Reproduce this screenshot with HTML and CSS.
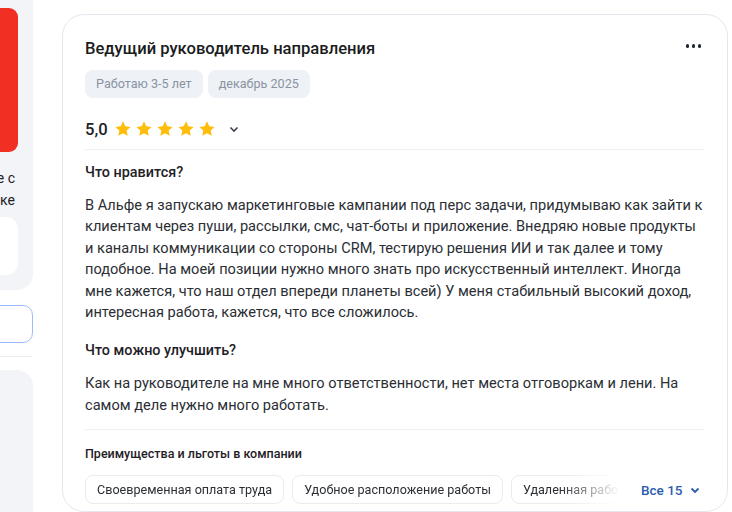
FILE: index.html
```html
<!DOCTYPE html>
<html lang="ru">
<head>
  <meta charset="UTF-8">
  <meta name="viewport" content="width=device-width, initial-scale=1.0">
  <title>Отзыв</title>
  <link rel="stylesheet" href="styles.css">
</head>
<body>
  <aside class="side">
    <div class="promo">
      <div class="promo-banner"></div>
      <p class="promo-text">Узнайте больше о компании и работе с<br>нами в нашей рассылке</p>
      <div class="promo-box"></div>
    </div>
    <div class="side-button"></div>
    <hr class="side-line">
    <div class="promo promo-next"></div>
  </aside>

  <main class="review">
    <div class="review-head">
      <h1>Ведущий руководитель направления</h1>
      <button class="more" aria-label="Ещё">
        <span></span><span></span><span></span>
      </button>
    </div>

    <div class="tags">
      <span class="tag">Работаю 3-5 лет</span>
      <span class="tag">декабрь 2025</span>
    </div>

    <div class="rating">
      <span class="score">5,0</span>
      <div class="stars">
        <svg viewBox="0 0 24 24"><path d="M12 1.8l3.1 6.5 7 .9-5.2 4.9 1.4 7L12 17.6l-6.3 3.5 1.4-7L1.9 9.2l7-.9z"/></svg>
        <svg viewBox="0 0 24 24"><path d="M12 1.8l3.1 6.5 7 .9-5.2 4.9 1.4 7L12 17.6l-6.3 3.5 1.4-7L1.9 9.2l7-.9z"/></svg>
        <svg viewBox="0 0 24 24"><path d="M12 1.8l3.1 6.5 7 .9-5.2 4.9 1.4 7L12 17.6l-6.3 3.5 1.4-7L1.9 9.2l7-.9z"/></svg>
        <svg viewBox="0 0 24 24"><path d="M12 1.8l3.1 6.5 7 .9-5.2 4.9 1.4 7L12 17.6l-6.3 3.5 1.4-7L1.9 9.2l7-.9z"/></svg>
        <svg viewBox="0 0 24 24"><path d="M12 1.8l3.1 6.5 7 .9-5.2 4.9 1.4 7L12 17.6l-6.3 3.5 1.4-7L1.9 9.2l7-.9z"/></svg>
      </div>
      <svg class="chevron" viewBox="0 0 12 12"><path d="M2.5 4.5L6 8l3.5-3.5"/></svg>
    </div>

    <section class="block">
      <h2>Что нравится?</h2>
      <p>В Альфе я запускаю маркетинговые кампании под перс задачи, придумываю как зайти к клиентам через пуши, рассылки, смс, чат-боты и приложение. Внедряю новые продукты и каналы коммуникации со стороны CRM, тестирую решения ИИ и так далее и тому подобное. На моей позиции нужно много знать про искусственный интеллект. Иногда мне кажется, что наш отдел впереди планеты всей) У меня стабильный высокий доход, интересная работа, кажется, что все сложилось.</p>
      <h2>Что можно улучшить?</h2>
      <p>Как на руководителе на мне много ответственности, нет места отговоркам и лени. На самом деле нужно много работать.</p>
    </section>

    <section class="perks">
      <h3>Преимущества и льготы в компании</h3>
      <div class="perks-row">
        <div class="chips">
          <span class="chip">Своевременная оплата труда</span>
          <span class="chip">Удобное расположение работы</span>
          <span class="chip">Удаленная работа</span>
        </div>
        <button class="all">Все 15
          <svg viewBox="0 0 12 12"><path d="M2.5 4.5L6 8l3.5-3.5"/></svg>
        </button>
      </div>
    </section>
  </main>
</body>
</html>
```

FILE: styles.css
```css
body {
  margin: 0;
  font-family: Roboto, 'Noto Sans', sans-serif;
  color: #1f2126;
  background: #fff;
  display: flex;
  gap: 29px;
  overflow: hidden;
  height: 512px;
}

/* left column, mostly off screen */
.side {
  width: 300px;
  margin-left: -267px;
  flex-shrink: 0;
}

.promo {
  background: #f3f4f8;
  border-radius: 0 0 16px 16px;
  padding: 8px 15px 15px 16px;
}

.promo-banner {
  height: 144px;
  background: #f12f23;
  border-radius: 9px;
}

.promo-text {
  margin: 15px 3px 6px 0;
  font-size: 14px;
  line-height: 22px;
  text-align: right;
  color: #1f2126;
}

.promo-box {
  height: 58px;
  background: #fff;
  border-radius: 12px;
}

.side-button {
  margin-top: 15px;
  height: 36px;
  border: 1px solid #9dbcff;
  border-radius: 10px;
}

.side-line {
  margin: 13px 1px 13px 0;
  border: none;
  border-top: 1px solid #e9ebef;
}

.promo-next {
  height: 200px;
  border-radius: 16px;
}

/* review card */
.review {
  width: 620px;
  margin-top: 14px;
  border: 1px solid #e3e8ef;
  border-radius: 22px;
  padding: 24px 22px 0 22px;
  flex-shrink: 0;
}

.review-head {
  display: flex;
  justify-content: space-between;
  align-items: center;
  height: 20px;
}

h1 {
  margin: 0;
  font-size: 16.6px;
  font-weight: 500;
  line-height: 20px;
  color: #1a1c20;
}

.more {
  display: flex;
  gap: 2.5px;
  border: none;
  background: none;
  padding: 0;
  margin: -6px 4px 0 0;
}

.more span {
  width: 3.5px;
  height: 3.5px;
  border-radius: 50%;
  background: #1d2533;
}

.tags {
  display: flex;
  gap: 5px;
  margin-top: 11px;
}

.tag {
  height: 28px;
  line-height: 28px;
  padding: 0 11px;
  font-size: 12.6px;
  color: #8a93a1;
  background: #eef1f6;
  border-radius: 8px;
}

.rating {
  display: flex;
  align-items: center;
  height: 22px;
  margin-top: 20px;
  padding-bottom: 9px;
  border-bottom: 1px solid #eef0f3;
}

.score {
  font-size: 16.6px;
  font-weight: 500;
  margin-right: 6px;
}

.stars {
  display: flex;
  gap: 3px;
}

.stars svg {
  width: 18px;
  height: 18px;
  fill: #ffbd0a;
}

.chevron {
  width: 12px;
  height: 12px;
  margin-left: 12px;
  fill: none;
  stroke: #3b4250;
  stroke-width: 1.6;
}

.block {
  padding-bottom: 13px;
  border-bottom: 1px solid #eef0f3;
}

h2 {
  margin: 14px 0 13px;
  font-size: 14.4px;
  font-weight: 500;
  line-height: 18px;
}

.block p {
  margin: 0 2px 19px 0;
  font-size: 14.6px;
  line-height: 21.4px;
  color: #2b2e34;
}

.block p:last-child {
  margin-bottom: 0;
}

.perks h3 {
  margin: 16px 0 13px;
  font-size: 12.5px;
  font-weight: 500;
  line-height: 16px;
}

.perks-row {
  display: flex;
  align-items: center;
}

.chips {
  display: flex;
  gap: 8px;
  width: 540px;
  overflow: hidden;
  -webkit-mask-image: linear-gradient(to right, #000 88%, transparent 99%);
  mask-image: linear-gradient(to right, #000 88%, transparent 99%);
}

.chip {
  flex-shrink: 0;
  height: 27px;
  line-height: 27px;
  padding: 0 11px;
  font-size: 12.6px;
  color: #2b2e34;
  border: 1px solid #e8ebf0;
  border-radius: 8px;
}

.all {
  display: flex;
  align-items: center;
  gap: 6px;
  margin-left: 16px;
  border: none;
  background: none;
  padding: 0;
  font-family: inherit;
  font-size: 13.5px;
  font-weight: 500;
  color: #2c5bb0;
}

.all svg {
  width: 12px;
  height: 12px;
  fill: none;
  stroke: #2c5bb0;
  stroke-width: 1.8;
}
```
